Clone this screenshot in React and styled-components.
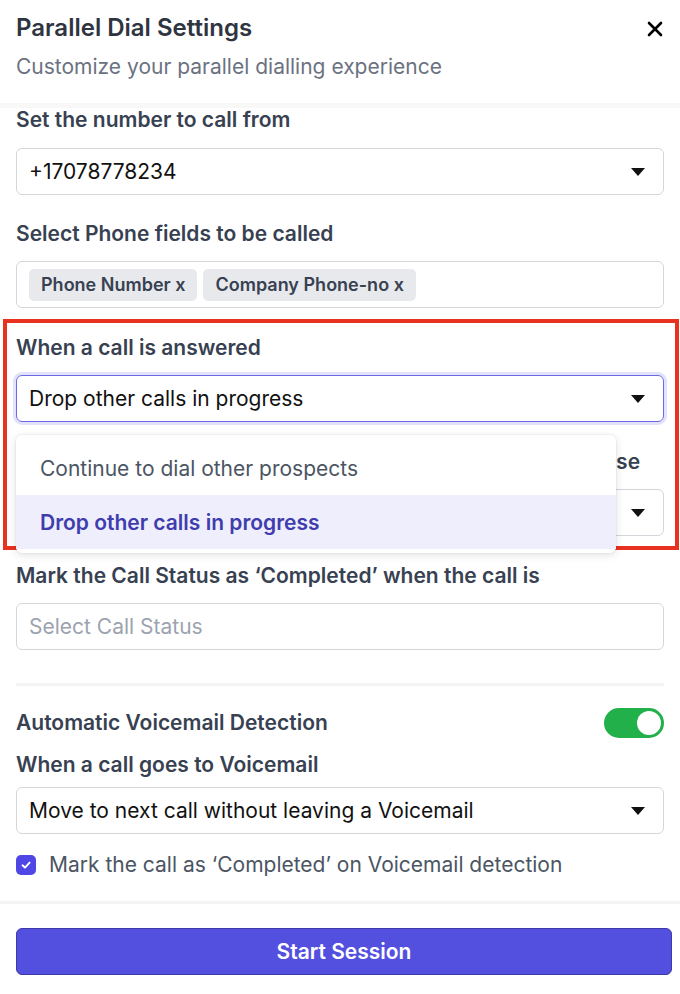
import React from 'react'
import styled, { createGlobalStyle } from 'styled-components'

const GlobalStyle = createGlobalStyle`
  * { box-sizing: border-box; }
  body {
    margin: 0;
    background: #fff;
    font-family: Inter, "Noto Sans", sans-serif;
  }
`

const Panel = styled.div`
  width: 680px;
  height: 994px;
  display: flex;
  flex-direction: column;
  background: #fff;
  overflow: hidden;
`

const Header = styled.div`
  height: 108px;
  padding: 13px 16px 0 16px;
  display: flex;
  justify-content: space-between;
  align-items: flex-start;
  border-bottom: 5px solid #f8f8f9;
`

const Title = styled.h1`
  margin: 0;
  font-size: 24px;
  line-height: 30px;
  font-weight: 600;
  color: #2f3441;
`

const Subtitle = styled.p`
  margin: 11px 0 0 0;
  font-size: 21px;
  line-height: 26px;
  color: #6b7280;
`

const CloseButton = styled.button`
  border: none;
  background: none;
  padding: 0;
  margin: 5px -2px 0 0;
  width: 22px;
  height: 22px;
  display: flex;
  align-items: center;
  justify-content: center;
  cursor: pointer;
`

const Body = styled.div`
  flex: 1;
  padding: 0 16px;
  display: flex;
  flex-direction: column;
`

const Field = styled.div`
  display: flex;
  flex-direction: column;
  margin-top: ${p => p.$top || 0}px;
`

const Label = styled.label`
  font-size: 21px;
  line-height: 24px;
  font-weight: 600;
  color: #374151;
  margin-bottom: ${p => p.$gap ?? 15}px;
  white-space: nowrap;
  overflow: hidden;
`

const SelectWrap = styled.div`
  position: relative;
`

const SelectBox = styled.div`
  height: 47px;
  border: 1px solid ${p => (p.$focused ? '#6d68e8' : '#d4d6db')};
  box-shadow: ${p => (p.$focused ? '0 0 0 3px #e3e2fb' : 'none')};
  border-radius: 6px;
  display: flex;
  align-items: center;
  justify-content: space-between;
  padding: 0 18px 0 12px;
  font-size: 21px;
  color: ${p => (p.$placeholder ? '#9ca3af' : '#111')};
`

const Arrow = styled.span`
  width: 0;
  height: 0;
  border-left: 7px solid transparent;
  border-right: 7px solid transparent;
  border-top: 8px solid #111;
`

const Chips = styled.div`
  display: flex;
  gap: 6px;
  padding: 0 12px;
  height: 47px;
  align-items: center;
  border: 1px solid #d4d6db;
  border-radius: 6px;
`

const Chip = styled.span`
  background: #e8e9ec;
  border-radius: 5px;
  padding: 0 12px;
  height: 32px;
  display: flex;
  align-items: center;
  font-size: 18px;
  font-weight: 600;
  color: #374151;
`

const Highlight = styled.div`
  margin: 11px -15px 0 -13px;
  padding: 13px 11px 10px 9px;
  border: 4px solid #e6321f;
  display: flex;
  flex-direction: column;
`

const Menu = styled.div`
  position: absolute;
  top: calc(100% + 13px);
  left: 0;
  width: 600px;
  background: #fff;
  border-radius: 6px;
  box-shadow: 0 2px 8px rgba(0, 0, 0, 0.12), 0 0 0 1px rgba(0, 0, 0, 0.03);
  padding: 6px 0 4px 0;
  z-index: 2;
`

const MenuItem = styled.div`
  height: 54px;
  display: flex;
  align-items: center;
  padding-left: 24px;
  font-size: 21px;
  font-weight: ${p => (p.$active ? 600 : 400)};
  color: ${p => (p.$active ? '#3f3dae' : '#4b5563')};
  background: ${p => (p.$active ? '#efeefc' : '#fff')};
`

const Divider = styled.div`
  height: 3px;
  background: #f3f4f6;
  margin-top: 33px;
`

const ToggleRow = styled.div`
  margin-top: 22px;
  display: flex;
  align-items: center;
  justify-content: space-between;
`

const Toggle = styled.div`
  width: 60px;
  height: 30px;
  border-radius: 15px;
  background: #22b04b;
  display: flex;
  align-items: center;
  justify-content: flex-end;
  padding: 3px;
`

const Knob = styled.span`
  width: 24px;
  height: 24px;
  border-radius: 50%;
  background: #fff;
`

const CheckRow = styled.div`
  margin-top: 19px;
  display: flex;
  align-items: center;
  gap: 13px;
  font-size: 21px;
  line-height: 24px;
  color: #4b5563;
`

const CheckBox = styled.span`
  width: 20px;
  height: 20px;
  border-radius: 5px;
  background: #4f46e5;
  display: flex;
  align-items: center;
  justify-content: center;
  flex-shrink: 0;
`

const Footer = styled.div`
  border-top: 3px solid #f4f4f5;
  padding: 24px 8px 19px 16px;
`

const StartButton = styled.button`
  width: 100%;
  height: 47px;
  border: 1px solid #3d3aa8;
  border-radius: 6px;
  background: #5350e0;
  color: #fff;
  font-family: Inter, "Noto Sans", sans-serif;
  font-size: 21px;
  font-weight: 600;
  cursor: pointer;
`

const Select = ({ value, focused, placeholder, children }) => (
  <SelectWrap>
    <SelectBox $focused={focused} $placeholder={placeholder}>
      <span>{value}</span>
      {!placeholder && <Arrow />}
    </SelectBox>
    {children}
  </SelectWrap>
)

export default function App () {
  return (
    <>
      <GlobalStyle />
      <Panel>
        <Header>
          <div>
            <Title>Parallel Dial Settings</Title>
            <Subtitle>Customize your parallel dialling experience</Subtitle>
          </div>
          <CloseButton aria-label='close'>
            <svg width='16' height='16' viewBox='0 0 16 16'>
              <path d='M2 2 L14 14 M14 2 L2 14' stroke='#000' strokeWidth='2.6' strokeLinecap='round' />
            </svg>
          </CloseButton>
        </Header>
        <Body>
          <Field>
            <Label $gap={16}>Set the number to call from</Label>
            <Select value='+17078778234' />
          </Field>
          <Field $top={27}>
            <Label>Select Phone fields to be called</Label>
            <Chips>
              <Chip>Phone Number x</Chip>
              <Chip>Company Phone-no x</Chip>
            </Chips>
          </Field>
          <Highlight>
            <Field>
              <Label>When a call is answered</Label>
              <Select value='Drop other calls in progress' focused>
                <Menu>
                  <MenuItem>Continue to dial other prospects</MenuItem>
                  <MenuItem $active>Drop other calls in progress</MenuItem>
                </Menu>
              </Select>
            </Field>
            <Field $top={28}>
              <Label>When none of the calls are answered by the prospects, pause</Label>
              <Select value='Continue to dial other prospects' />
            </Field>
          </Highlight>
          <Field $top={14}>
            <Label>Mark the Call Status as ‘Completed’ when the call is</Label>
            <Select value='Select Call Status' placeholder />
          </Field>
          <Divider />
          <ToggleRow>
            <Label $gap={0}>Automatic Voicemail Detection</Label>
            <Toggle><Knob /></Toggle>
          </ToggleRow>
          <Field $top={15}>
            <Label $gap={10}>When a call goes to Voicemail</Label>
            <Select value='Move to next call without leaving a Voicemail' />
          </Field>
          <CheckRow>
            <CheckBox>
              <svg width='12' height='12' viewBox='0 0 12 12'>
                <path d='M2.5 6.3 L5 8.6 L9.6 3.6' stroke='#fff' strokeWidth='1.9' fill='none' strokeLinecap='round' strokeLinejoin='round' />
              </svg>
            </CheckBox>
            Mark the call as ‘Completed’ on Voicemail detection
          </CheckRow>
        </Body>
        <Footer>
          <StartButton>Start Session</StartButton>
        </Footer>
      </Panel>
    </>
  )
}
